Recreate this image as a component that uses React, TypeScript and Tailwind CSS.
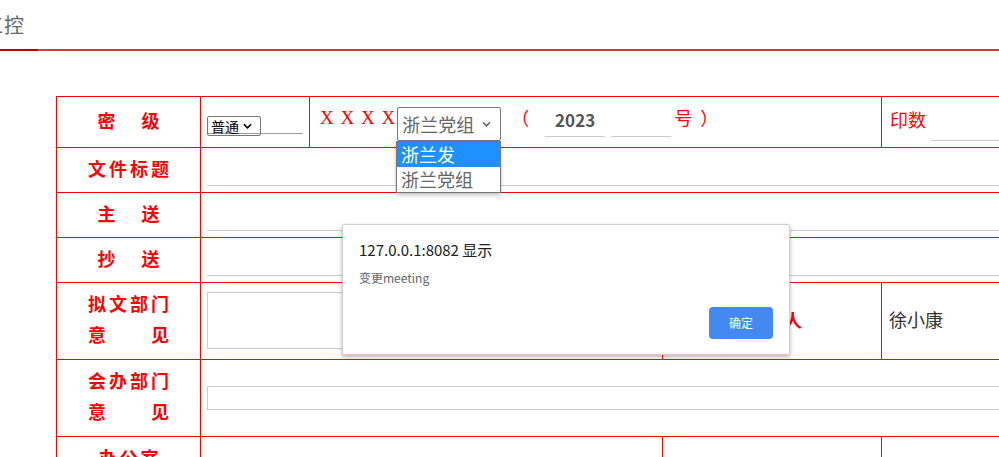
import React from "react";

const label = "text-[18px] font-bold text-[#ff0000] tracking-[3px]";
const cell = "border-r border-b border-[#ff0000]";

function Chevron({ className }: { className?: string }) {
  return (
    <svg viewBox="0 0 10 6" className={className} fill="none">
      <path d="M1 1l4 4 4-4" stroke="currentColor" strokeWidth="1.8" />
    </svg>
  );
}

export default function App() {
  return (
    <div
      className="relative w-[999px] h-[457px] overflow-hidden bg-white"
      style={{ fontFamily: '"Noto Sans CJK SC", "Liberation Sans", sans-serif' }}
    >
      {/* Header */}
      <div className="h-[49px] flex items-center">
        <span className="-ml-[17px] text-[20px] text-[#666] leading-none tracking-[1px]">工控</span>
      </div>
      <div className="flex h-[2px]">
        <div className="w-[38px] bg-[#c40000]" />
        <div className="flex-1 bg-[#d23c3e]" />
      </div>

      {/* Form table */}
      <div className="ml-[56px] mt-[45px] w-[1045px] grid grid-cols-[144px_109px_353px_219px_219px] border-l border-t border-[#ff0000]">
        {/* row 1 */}
        <div className={`${cell} h-[51px] flex items-center justify-center ${label} tracking-[4px]`}>
          <span className="pl-[4px] -mt-[3px]">密　级</span>
        </div>
        <div className={`${cell} h-[51px] pl-[6px] pt-[16px]`}>
          <div className="w-[96px] border-b border-[#999] h-[21px]">
            <div className="inline-flex items-center h-[20px] w-[54px] border border-[#767676] rounded-[2px] pl-[3px] text-[14px] text-black leading-none">
              普通
              <Chevron className="w-[9px] h-[6px] ml-[4px] text-black" />
            </div>
          </div>
        </div>
        <div className={`${cell} col-span-2 h-[51px] flex items-center pl-[10px]`}>
          <span
            className="text-[19px] text-[#ff0000] tracking-[1px] -mt-[8px]"
            style={{ fontFamily: '"Liberation Serif", serif' }}
          >
            X X X X
          </span>
          <div className="ml-[1px] mt-[4px] flex items-center h-[34px] w-[104px] border border-[#767676] rounded-[2px] pl-[4px] text-[18px] text-[#666]">
            浙兰党组
            <Chevron className="w-[9px] h-[6px] ml-[8px] text-[#666]" />
          </div>
          <span className="ml-[10px] -mt-[10px] text-[18px] text-[#ff0000]">（</span>
          <input
            readOnly
            defaultValue="2023"
            className="ml-[16px] mt-[4px] w-[60px] h-[26px] pb-[8px] border-b border-[#ccc] text-center text-[17px] font-semibold text-[#555] outline-none"
          />
          <input
            readOnly
            className="ml-[6px] mt-[4px] w-[60px] h-[26px] border-b border-[#ccc] outline-none"
          />
          <span className="ml-[3px] -mt-[10px] text-[18px] text-[#ff0000] tracking-[8px]">号）</span>
        </div>
        <div className={`${cell} h-[51px] flex items-center pl-[8px]`}>
          <span className="text-[18px] text-[#ff0000] -mt-[5px]">印数</span>
          <input readOnly className="ml-[5px] mt-[14px] w-[160px] h-[24px] border-b border-[#ccc] outline-none" />
        </div>

        {/* rows 2-4 */}
        {["文件标题", "主　送", "抄　送"].map((t) => (
          <React.Fragment key={t}>
            <div className={`${cell} h-[45px] flex items-center justify-center ${label} ${t.length === 3 ? "tracking-[4px]" : ""}`}>
              <span className={`-mt-[4px] ${t.length === 3 ? "pl-[4px]" : "pl-[3px]"}`}>{t}</span>
            </div>
            <div className={`${cell} col-span-4 h-[45px] flex items-end pb-[6px] pl-[6px]`}>
              <input readOnly className="w-full h-[24px] border-b border-[#ccc] outline-none" />
            </div>
          </React.Fragment>
        ))}

        {/* row 5 */}
        <div className={`${cell} h-[77px] flex flex-col items-center justify-center ${label} leading-[31px]`}>
          <span className="pl-[3px] -mt-[4px]">拟文部门</span>
          <span className="pl-[3px]">意　　见</span>
        </div>
        <div className={`${cell} col-span-2 h-[77px] pl-[6px] pt-[9px] pr-[6px]`}>
          <textarea readOnly className="w-full h-[57px] border border-[#ccc] resize-none outline-none" />
        </div>
        <div className={`${cell} h-[77px] flex items-center justify-center ${label}`}>
          <span className="pl-[3px] -mt-[4px]">拟稿人</span>
        </div>
        <div className={`${cell} h-[77px] flex items-center pl-[7px] text-[18px] text-[#333]`}>
          <span className="-mt-[4px]">徐小康</span>
        </div>

        {/* row 6 */}
        <div className={`${cell} h-[77px] flex flex-col items-center justify-center ${label} leading-[31px]`}>
          <span className="pl-[3px] -mt-[4px]">会办部门</span>
          <span className="pl-[3px]">意　　见</span>
        </div>
        <div className={`${cell} col-span-4 h-[77px] pl-[6px] pt-[26px]`}>
          <textarea readOnly className="w-full h-[24px] border border-[#ccc] resize-none outline-none" />
        </div>

        {/* row 7 */}
        <div className={`${cell} h-[77px] flex flex-col items-center justify-center ${label} leading-[31px]`}>
          <span className="pl-[3px] -mt-[4px]">办公室</span>
          <span className="pl-[3px]">意　　见</span>
        </div>
        <div className={`${cell} col-span-2 h-[77px]`} />
        <div className={`${cell} h-[77px]`} />
        <div className={`${cell} h-[77px]`} />
      </div>

      {/* open dropdown list */}
      <div className="absolute left-[396px] top-[141px] w-[105px] border border-[#767676] bg-white shadow-[0_2px_4px_rgba(0,0,0,0.25)] text-[18px] leading-[25px]">
        <div className="bg-[#1e90ff] text-white pl-[4px] h-[25px]">浙兰发</div>
        <div className="text-[#666] pl-[4px] h-[25px]">浙兰党组</div>
      </div>

      {/* alert dialog */}
      <div className="absolute left-[342px] top-[224px] w-[448px] h-[131px] bg-white border border-[#cfcfcf] rounded-[2px] shadow-[0_2px_4px_rgba(0,0,0,0.3)] px-[16px] pt-[14px] flex flex-col">
        <div className="text-[15px] text-[#202124] leading-[22px]">127.0.0.1:8082 显示</div>
        <div className="mt-[9px] text-[12px] text-[#5f6368] leading-[16px]">变更meeting</div>
        <div className="mt-auto mb-[15px] flex justify-end">
          <button className="w-[64px] h-[32px] rounded-[4px] bg-[#4489ef] text-white text-[12px]">确定</button>
        </div>
      </div>
    </div>
  );
}
